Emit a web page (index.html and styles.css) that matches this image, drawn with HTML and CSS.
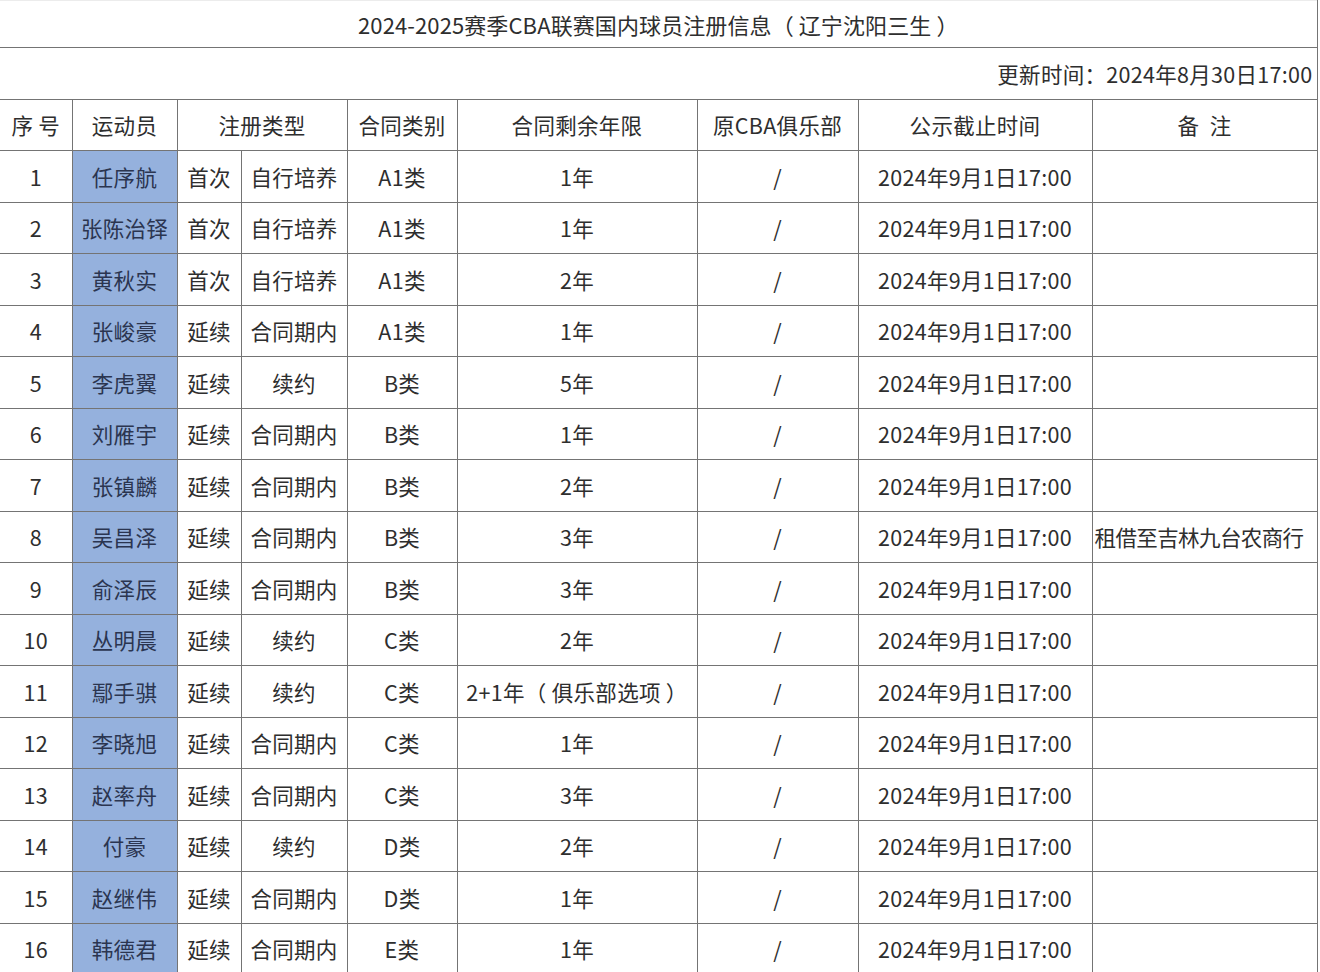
FILE: index.html
```html
<!DOCTYPE html>
<html lang="zh-CN">
<head>
<meta charset="utf-8">
<title>2024-2025赛季CBA联赛国内球员注册信息（辽宁沈阳三生）</title>
<link rel="stylesheet" href="styles.css">
</head>
<body>
<table class="reg">
  <colgroup>
    <col class="c-no">
    <col class="c-name">
    <col class="c-t1">
    <col class="c-t2">
    <col class="c-cls">
    <col class="c-yrs">
    <col class="c-club">
    <col class="c-date">
    <col class="c-note">
  </colgroup>
  <tr class="title-row"><td colspan="9">2024-2025赛季CBA联赛国内球员注册信息（ 辽宁沈阳三生 ）</td></tr>
  <tr class="update-row"><td colspan="9">更新时间：2024年8月30日17:00</td></tr>
  <tr class="head-row">
    <td>序&nbsp;号</td><td>运动员</td><td colspan="2">注册类型</td><td>合同类别</td><td>合同剩余年限</td><td>原CBA俱乐部</td><td>公示截止时间</td><td>备&nbsp;&nbsp;注</td>
  </tr>
  <tr><td>1</td><td class="name">任序航</td><td>首次</td><td>自行培养</td><td>A1类</td><td>1年</td><td>/</td><td>2024年9月1日17:00</td><td></td></tr>
  <tr><td>2</td><td class="name">张陈治铎</td><td>首次</td><td>自行培养</td><td>A1类</td><td>1年</td><td>/</td><td>2024年9月1日17:00</td><td></td></tr>
  <tr><td>3</td><td class="name">黄秋实</td><td>首次</td><td>自行培养</td><td>A1类</td><td>2年</td><td>/</td><td>2024年9月1日17:00</td><td></td></tr>
  <tr><td>4</td><td class="name">张峻豪</td><td>延续</td><td>合同期内</td><td>A1类</td><td>1年</td><td>/</td><td>2024年9月1日17:00</td><td></td></tr>
  <tr><td>5</td><td class="name">李虎翼</td><td>延续</td><td>续约</td><td>B类</td><td>5年</td><td>/</td><td>2024年9月1日17:00</td><td></td></tr>
  <tr><td>6</td><td class="name">刘雁宇</td><td>延续</td><td>合同期内</td><td>B类</td><td>1年</td><td>/</td><td>2024年9月1日17:00</td><td></td></tr>
  <tr><td>7</td><td class="name">张镇麟</td><td>延续</td><td>合同期内</td><td>B类</td><td>2年</td><td>/</td><td>2024年9月1日17:00</td><td></td></tr>
  <tr><td>8</td><td class="name">吴昌泽</td><td>延续</td><td>合同期内</td><td>B类</td><td>3年</td><td>/</td><td>2024年9月1日17:00</td><td class="note">租借至吉林九台农商行</td></tr>
  <tr><td>9</td><td class="name">俞泽辰</td><td>延续</td><td>合同期内</td><td>B类</td><td>3年</td><td>/</td><td>2024年9月1日17:00</td><td></td></tr>
  <tr><td>10</td><td class="name">丛明晨</td><td>延续</td><td>续约</td><td>C类</td><td>2年</td><td>/</td><td>2024年9月1日17:00</td><td></td></tr>
  <tr><td>11</td><td class="name">鄢手骐</td><td>延续</td><td>续约</td><td>C类</td><td>2+1年（ 俱乐部选项 ）</td><td>/</td><td>2024年9月1日17:00</td><td></td></tr>
  <tr><td>12</td><td class="name">李晓旭</td><td>延续</td><td>合同期内</td><td>C类</td><td>1年</td><td>/</td><td>2024年9月1日17:00</td><td></td></tr>
  <tr><td>13</td><td class="name">赵率舟</td><td>延续</td><td>合同期内</td><td>C类</td><td>3年</td><td>/</td><td>2024年9月1日17:00</td><td></td></tr>
  <tr><td>14</td><td class="name">付豪</td><td>延续</td><td>续约</td><td>D类</td><td>2年</td><td>/</td><td>2024年9月1日17:00</td><td></td></tr>
  <tr><td>15</td><td class="name">赵继伟</td><td>延续</td><td>合同期内</td><td>D类</td><td>1年</td><td>/</td><td>2024年9月1日17:00</td><td></td></tr>
  <tr><td>16</td><td class="name">韩德君</td><td>延续</td><td>合同期内</td><td>E类</td><td>1年</td><td>/</td><td>2024年9月1日17:00</td><td></td></tr>
</table>
</body>
</html>
```
FILE: styles.css
```css
html, body {
  margin: 0;
  padding: 0;
  background: #ffffff;
}

body {
  font-family: "Noto Sans CJK SC", "Noto Sans", sans-serif;
  color: #2e2e2e;
}

.reg {
  border-collapse: collapse;
  table-layout: fixed;
  width: 1317px;
  font-size: 21.5px;
  letter-spacing: 0.3px;
}

.c-no { width: 72px; }
.c-name { width: 105px; }
.c-t1 { width: 64px; }
.c-t2 { width: 106px; }
.c-cls { width: 110px; }
.c-yrs { width: 240px; }
.c-club { width: 161px; }
.c-date { width: 234px; }
.c-note { width: 225px; }

.reg td {
  border: 1px solid #747474;
  height: 50.5px;
  padding: 0;
  text-align: center;
  vertical-align: middle;
  white-space: nowrap;
  overflow: hidden;
  line-height: 1;
}

.reg tr td:first-child {
  border-left: 0;
}

.title-row td {
  height: 46px;
  font-size: 22px;
  letter-spacing: 0.1px;
  border-top: 1px solid #ececec;
}

.update-row td {
  height: 51px;
  text-align: right;
  padding-right: 4px;
}

.head-row td {
  height: 50px;
}

.reg td.name {
  background: #95b1dd;
  color: #2b3550;
}

.reg td.note {
  text-align: left;
  padding-left: 2px;
  letter-spacing: -0.6px;
}
```
